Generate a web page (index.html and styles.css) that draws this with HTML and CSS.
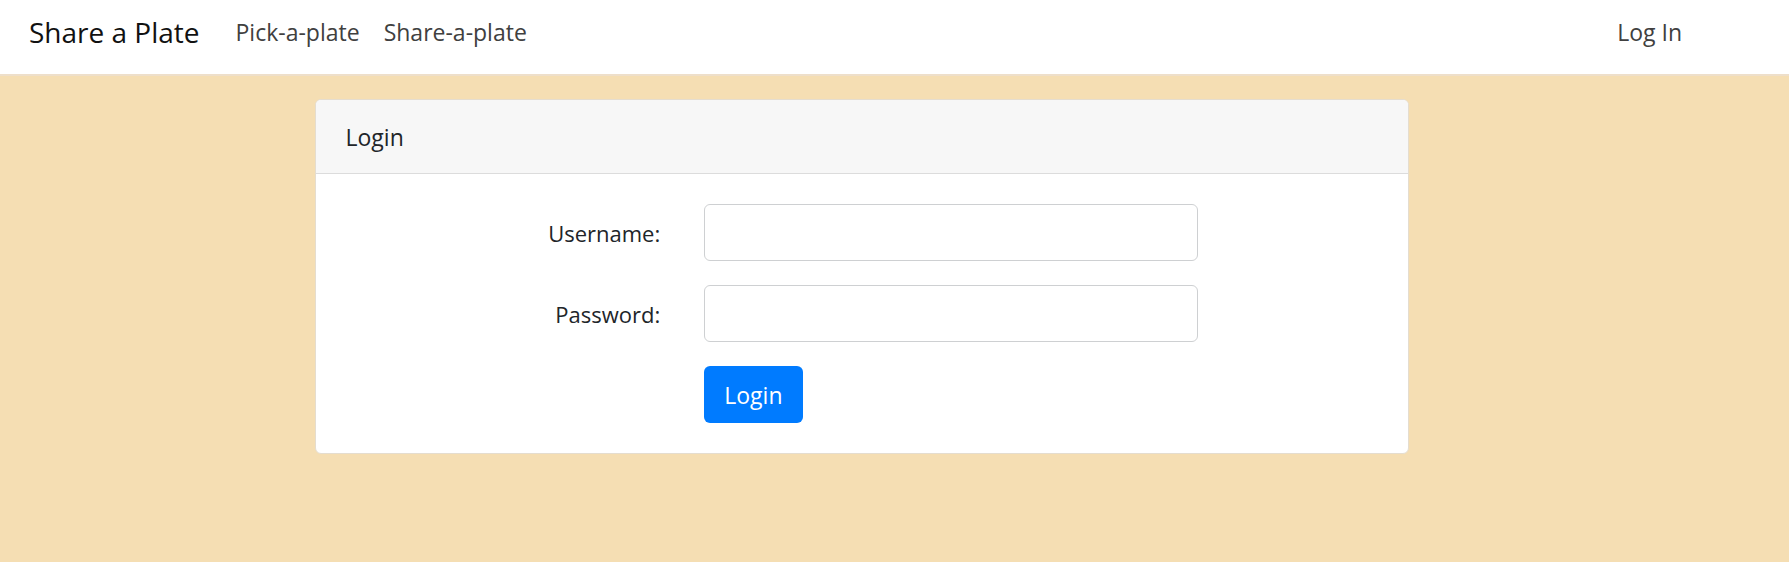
FILE: index.html
```html
<!DOCTYPE html>
<html lang="en">
<head>
<meta charset="utf-8">
<meta name="viewport" content="width=device-width, initial-scale=1">
<title>Share a Plate</title>
<link rel="stylesheet" href="styles.css">
</head>
<body>
<header class="navbar">
  <a class="brand" href="#">Share a Plate</a>
  <nav class="nav">
    <a class="nav-link" href="#">Pick-a-plate</a>
    <a class="nav-link" href="#">Share-a-plate</a>
    <a class="nav-link nav-login" href="#">Log In</a>
  </nav>
</header>
<main class="page">
  <section class="card">
    <div class="card-header">Login</div>
    <form class="card-body">
      <div class="form-row">
        <label class="label" for="username">Username:</label>
        <input class="input" id="username" name="username" type="text">
      </div>
      <div class="form-row">
        <label class="label" for="password">Password:</label>
        <input class="input" id="password" name="password" type="password">
      </div>
      <div class="form-row">
        <button class="button" type="submit">Login</button>
      </div>
    </form>
  </section>
</main>
</body>
</html>
```
FILE: styles.css
```css
* {
  box-sizing: border-box;
}

body {
  margin: 0;
  background: #f5deb3;
  color: #212529;
  font-family: "Segoe UI", "Open Sans", "Noto Sans", sans-serif;
  font-size: 23px;
  line-height: 36px;
}

.navbar {
  display: flex;
  align-items: center;
  padding: 7px 107px 17px 29px;
  background: #fff;
  border-bottom: 2px solid #eedfca;
}

.brand {
  margin-right: 36px;
  color: #111;
  font-size: 28px;
  line-height: 50px;
  text-decoration: none;
}

.nav {
  display: flex;
  flex: 1;
  gap: 24px;
}

.nav-link {
  color: #404040;
  text-decoration: none;
}

.nav-login {
  margin-left: auto;
}

.page {
  padding: 23px 66px 24px 0;
}

.card {
  max-width: 1094px;
  margin: 0 auto;
  background: #fff;
  border: 1px solid #e5ddcf;
  border-radius: 6px;
  overflow: hidden;
}

.card-header {
  padding: 19px 30px 18px;
  background: #f7f7f7;
  border-bottom: 1px solid #dcdcdc;
}

.card-body {
  display: grid;
  gap: 24px;
  padding: 30px;
}

.form-row {
  display: grid;
  grid-template-columns: 30.5% 47.8%;
  column-gap: 44px;
  align-items: center;
}

.label {
  font-size: 22px;
  text-align: right;
}

.input {
  width: 100%;
  height: 57px;
  padding: 9px 18px;
  background: #fff;
  border: 1px solid #ced0d2;
  border-radius: 6px;
  color: inherit;
  font: inherit;
}

.button {
  grid-column: 2;
  justify-self: start;
  height: 57px;
  padding: 0 20px;
  background: #007bff;
  border: 0;
  border-radius: 6px;
  color: #fff;
  font: inherit;
}
```
